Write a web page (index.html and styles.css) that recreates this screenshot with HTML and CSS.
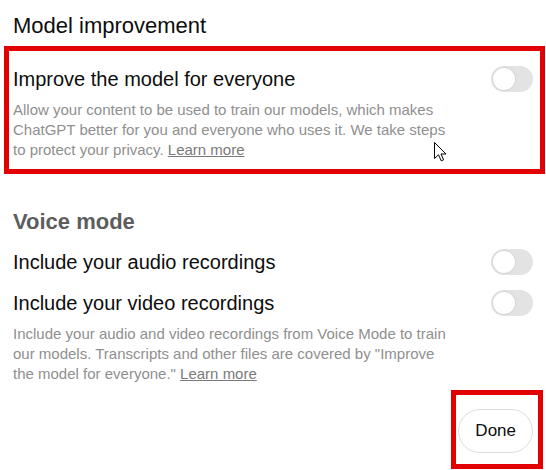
FILE: index.html
```html
<!DOCTYPE html>
<html lang="en">
<head>
    <meta charset="UTF-8">
    <meta name="viewport" content="width=device-width, initial-scale=1.0">
    <title>Data controls</title>
    <link rel="stylesheet" href="styles.css">
</head>
<body>
    <main class="settings">
        <h2 class="section-title">Model improvement</h2>

        <!-- Highlighted setting -->
        <section class="highlight">
            <div class="setting-row">
                <span class="setting-label">Improve the model for everyone</span>
                <span class="toggle"><span class="knob"></span></span>
            </div>
            <p class="setting-desc">
                Allow your content to be used to train our models, which makes ChatGPT better for you and everyone who uses it. We take steps to protect your privacy. <a href="#">Learn more</a>
            </p>
            <svg class="cursor" width="13" height="20" viewBox="0 0 13 20">
                <path d="M0.5 0.5 L0.5 16.5 L4.5 12.8 L7.2 18.8 L9.6 17.8 L7 12 L12 12 Z" fill="#fff" stroke="#000" stroke-width="1" stroke-linejoin="miter"/>
            </svg>
        </section>

        <h2 class="section-title voice">Voice mode</h2>
        <div class="setting-row">
            <span class="setting-label">Include your audio recordings</span>
            <span class="toggle"><span class="knob"></span></span>
        </div>
        <div class="setting-row next">
            <span class="setting-label">Include your video recordings</span>
            <span class="toggle"><span class="knob"></span></span>
        </div>
        <p class="setting-desc">
            Include your audio and video recordings from Voice Mode to train our models. Transcripts and other files are covered by "Improve the model for everyone." <a href="#">Learn more</a>
        </p>

        <div class="done-box">
            <button class="done-button">Done</button>
        </div>
    </main>
</body>
</html>
```

FILE: styles.css
```css
* {
    margin: 0;
    padding: 0;
    box-sizing: border-box;
}
body {
    font-family: 'Liberation Sans', Arial, sans-serif;
    background: white;
    color: #0d0d0d;
}
.settings {
    display: flex;
    flex-direction: column;
    padding: 12px 13px 0 13px;
}
.section-title {
    font-size: 22px;
    line-height: 28px;
    font-weight: normal;
}
.section-title.voice {
    margin-top: 34px;
    margin-bottom: 13px;
    font-weight: bold;
    color: #5d5d5d;
}

/* Red annotation boxes */
.highlight {
    position: relative;
    margin: 6px -12px 0 -9px;
    padding: 15px 7px 9px 4px;
    border: 5px solid #e30000;
}
.cursor {
    position: absolute;
    left: 425px;
    top: 91px;
}

.setting-row {
    display: flex;
    justify-content: space-between;
    align-items: center;
    height: 26px;
}
.setting-row.next {
    margin-top: 15px;
}
.setting-label {
    font-size: 20px;
    line-height: 26px;
}
.toggle {
    display: flex;
    align-items: center;
    width: 42px;
    height: 26px;
    padding: 0 2px;
    border-radius: 13px;
    background: #e3e3e3;
}
.knob {
    width: 22px;
    height: 22px;
    border-radius: 50%;
    background: white;
    box-shadow: 0 0 0 1px #d6d6d6;
}
.setting-desc {
    max-width: 440px;
    margin-top: 8px;
    font-size: 15px;
    line-height: 20px;
    color: #8f8f8f;
}
.setting-desc a {
    color: #7a7a7a;
    text-decoration: underline;
}

.done-box {
    align-self: flex-end;
    margin: 6px -10px 0 0;
    padding: 14px 5px 11px 2px;
    border: 5px solid #e30000;
}
.done-button {
    display: block;
    height: 44px;
    padding: 0 16px;
    font-family: inherit;
    font-size: 17px;
    color: #0d0d0d;
    background: white;
    border: 1px solid #dcdcdc;
    border-radius: 22px;
    cursor: pointer;
}
```
